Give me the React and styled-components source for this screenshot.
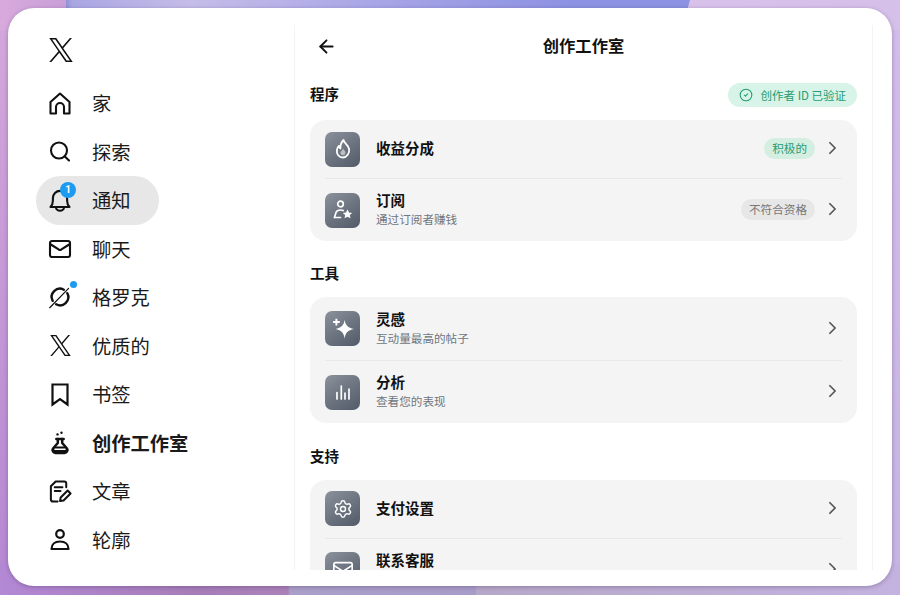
import styled, { createGlobalStyle } from "styled-components";
import { ArrowLeft, ChevronRight, CircleCheck, Search, Settings, Mail } from "lucide-react";

const Global = createGlobalStyle`
  html, body { margin: 0; padding: 0; }
  body {
    font-family: "Noto Sans CJK SC", "Noto Sans", sans-serif;
    background-color: #b9a0d6;
  }
  * { box-sizing: border-box; }
`;

const NAV = [
  { label: "家", icon: "home" },
  { label: "探索", icon: "search" },
  { label: "通知", icon: "bell", active: true },
  { label: "聊天", icon: "mail" },
  { label: "格罗克", icon: "grok" },
  { label: "优质的", icon: "x" },
  { label: "书签", icon: "bookmark" },
  { label: "创作工作室", icon: "flask", bold: true },
  { label: "文章", icon: "article" },
  { label: "轮廓", icon: "user" },
];

const SECTIONS = [
  {
    title: "程序",
    badge: "创作者 ID 已验证",
    rows: [
      { icon: "flame", title: "收益分成", pill: "积极的", good: true },
      { icon: "userStar", title: "订阅", sub: "通过订阅者赚钱", pill: "不符合资格", tall: true },
    ],
  },
  {
    title: "工具",
    rows: [
      { icon: "spark", title: "灵感", sub: "互动量最高的帖子", tall: true },
      { icon: "bars", title: "分析", sub: "查看您的表现", tall: true },
    ],
  },
  {
    title: "支持",
    rows: [
      { icon: "gear", title: "支付设置" },
      { icon: "envelope", title: "联系客服", tall: true },
    ],
  },
];

function XLogo({ size }) {
  return (
    <svg width={size} height={size} viewBox="0 0 24 24" fill="#111">
      <path d="M14.23 10.16 22.96 0h-2.07l-7.58 8.82L7.25 0H.27l9.16 13.33L.27 24h2.07l8.01-9.31L16.75 24h6.98l-9.5-13.84Zm-2.83 3.3-.93-1.33L3.09 1.56h3.18l5.96 8.52.93 1.33 7.74 11.08h-3.18l-6.32-9.03Z" />
    </svg>
  );
}

function NavIcon({ name }) {
  if (name === "search") return <Search size={25} strokeWidth={2.1} color="#111" />;
  if (name === "mail") return <Mail size={26} strokeWidth={2.1} color="#111" />;
  if (name === "x") return <XLogo size={21} />;
  if (name === "home") {
    return (
      <svg width="25" height="25" viewBox="0 0 24 24" fill="none" stroke="#111" strokeWidth="2.1" strokeLinejoin="round">
        <path d="M2.500 22V10.500L12 2l9.500 8.500V22H16v-6.500a4 4 0 0 0-8 0V22Z" />
      </svg>
    );
  }
  if (name === "bookmark") {
    return (
      <svg width="25" height="25" viewBox="0 0 24 24" fill="none" stroke="#111" strokeWidth="2.2">
        <path d="M4.500 2h15v20L12 16.500 4.500 22Z" />
      </svg>
    );
  }
  if (name === "user") {
    return (
      <svg width="25" height="25" viewBox="0 0 24 24" fill="none" stroke="#111" strokeWidth="2.2" strokeLinejoin="round">
        <circle cx="12" cy="6.500" r="3.800" />
        <path d="M3.500 21.500c0-4.500 3.200-7.500 8.500-7.500s8.500 3 8.500 7.500Z" />
      </svg>
    );
  }
  if (name === "bell") {
    return (
      <svg width="24" height="24" viewBox="0 0 24 24" fill="none" stroke="#111" strokeWidth="2.1" strokeLinecap="round" strokeLinejoin="round">
        <path d="M2.500 19h19c-1.600-1.600-2.400-3.500-2.400-6.500V10a7.100 7.100 0 0 0-14.200 0v2.500c0 3-.8 4.900-2.400 6.500Z" />
        <path d="M8 19.500a4 3.200 0 0 0 8 0" />
      </svg>
    );
  }
  if (name === "grok") {
    return (
      <svg width="28" height="28" viewBox="0 0 28 28" fill="none" stroke="#111" strokeWidth="2.800" strokeLinecap="round">
        <path d="M18.500 5.500A9.600 9.600 0 0 0 5.500 18.500" />
        <path d="M22.500 9.500A9.600 9.600 0 0 1 9.500 22.500" />
        <path d="M24 4 2 26.500" strokeWidth="1.400" />
      </svg>
    );
  }
  if (name === "flask") {
    return (
      <svg width="26" height="26" viewBox="0 0 24 24" fill="none" stroke="#111" strokeWidth="2.500" strokeLinecap="round" strokeLinejoin="round">
        <path d="M8.300 8h7.400" />
        <path d="M9.800 8v4L5 17.500c-1.200 2 .2 4.500 2.500 4.500h9c2.300 0 3.700-2.500 2.500-4.500L14.200 12V8" />
        <path d="M6.500 15.500h11l2 4-2 2.500h-11l-2-2.500z" fill="#111" stroke="none" />
        <path d="M7 18.300h10" stroke="#fff" strokeWidth="1.500" />
        <circle cx="9.500" cy="3.400" r="1.200" fill="#111" stroke="none" />
        <circle cx="13.500" cy="1.800" r="1.200" fill="#111" stroke="none" />
      </svg>
    );
  }
  if (name === "article") {
    return (
      <svg width="25" height="25" viewBox="0 0 25 25" fill="none" stroke="#111" strokeWidth="2.1" strokeLinecap="round" strokeLinejoin="round">
        <path d="M10 23H5.500A2.500 2.500 0 0 1 3 20.500V7l5-5h9a2 2 0 0 1 2 2v4" />
        <path d="M7 8h8M7 12h6" />
        <path d="m12.500 22.500.7-3.700 7.300-7.300 3 3-7.300 7.300-3.700.7Z" />
      </svg>
    );
  }
  return null;
}

function TileIcon({ name }) {
  if (name === "gear") return <Settings size={20} strokeWidth={1.7} color="#fff" />;
  if (name === "envelope") return <Mail size={22} strokeWidth={1.8} color="#fff" />;
  if (name === "flame") {
    return (
      <svg width="20" height="22" viewBox="0 0 20 22" fill="none" stroke="#fff" strokeWidth="1.800" strokeLinejoin="round">
        <path d="M10.500 2c.5 3 4.800 5 5.600 9 .7 4-2.300 8.500-6.200 8.500s-6.600-3.500-6-7.500c.2-1.600 1-3 2-4 .2 1.200.7 2 1.500 2.500C7.200 7.500 8 4.500 10.500 2Z" />
        <path d="M10.300 10.500c.2 1.500 2.300 2.500 2.300 4.500a2.700 2.700 0 0 1-5.300 0c0-1.300.8-1.700 1.400-2.300.5-.6 1.200-1.200 1.600-2.200Z" fill="#fff" stroke="none" opacity="0.550" />
      </svg>
    );
  }
  if (name === "userStar") {
    return (
      <svg width="22" height="22" viewBox="0 0 22 22" fill="none" stroke="#fff" strokeWidth="1.700" strokeLinecap="round" strokeLinejoin="round">
        <circle cx="8.500" cy="5" r="2.800" />
        <path d="M2.500 18.500 4 13.500c.5-1.500 1.800-2.500 4.500-2.500 1 0 2 .2 2.700.5" />
        <path d="M2.500 18.500h6" />
        <path d="m15.500 10.500 1.500 3 3.200.4-2.400 2.200.7 3.200-3-1.600-3 1.600.7-3.200-2.400-2.200 3.200-.4z" fill="#fff" stroke="none" />
      </svg>
    );
  }
  if (name === "spark") {
    return (
      <svg width="26" height="26" viewBox="0 0 24 24" fill="#fff">
        <path d="M13.500 3.500c.8 5.200 3 7.400 8.500 8.500-5.500 1.100-7.700 3.300-8.500 9-.8-5.700-3-7.900-8.500-9 5.500-1.100 7.700-3.300 8.500-8.500Z" />
        <path d="M5 2.500h1.800v2.200H9v1.800H6.800v2.200H5V6.500H2.800V4.700H5z" />
      </svg>
    );
  }
  if (name === "bars") {
    return (
      <svg width="18" height="18" viewBox="0 0 18 18" stroke="#fff" strokeWidth="1.700" strokeLinecap="round">
        <path d="M3 9.500V16M7.300 3v13M11 10v6M15 6v10" />
      </svg>
    );
  }
  return null;
}

function App() {
  return (
    <Page>
      <Global />
      <Strip />
      <Card>
        <Side>
          <LogoWrap><XLogo size={24} /></LogoWrap>
          <Nav>
            {NAV.map((item) => (
              <NavRow key={item.label} $active={item.active}>
                <NavGlyph>
                  <NavIcon name={item.icon} />
                  {item.icon === "bell" && <Count>1</Count>}
                  {item.icon === "grok" && <Dot />}
                </NavGlyph>
                <NavLabel $bold={item.bold}>{item.label}</NavLabel>
              </NavRow>
            ))}
          </Nav>
        </Side>
        <Main>
          <Header>
            <BackButton><ArrowLeft size={21} strokeWidth={2.2} color="#111" /></BackButton>
            <HeaderTitle>创作工作室</HeaderTitle>
          </Header>
          <Content>
            {SECTIONS.map((section) => (
              <section key={section.title}>
                <SectionHead>
                  <SectionTitle>{section.title}</SectionTitle>
                  {section.badge && (
                    <Verified>
                      <CircleCheck size={14} strokeWidth={1.8} />
                      {section.badge}
                    </Verified>
                  )}
                </SectionHead>
                <Group>
                  {section.rows.map((row) => (
                    <Row key={row.title} $tall={row.tall}>
                      <Tile><TileIcon name={row.icon} /></Tile>
                      <RowText $tall={row.tall}>
                        <RowTitle>{row.title}</RowTitle>
                        {row.sub && <RowSub>{row.sub}</RowSub>}
                      </RowText>
                      {row.pill && <Pill $good={row.good}>{row.pill}</Pill>}
                      <Chevron><ChevronRight size={22} strokeWidth={2} color="#555" /></Chevron>
                    </Row>
                  ))}
                </Group>
              </section>
            ))}
          </Content>
        </Main>
      </Card>
    </Page>
  );
}

export default App;

const Page = styled.div`
  position: relative;
  width: 900px;
  height: 595px;
  padding: 8px 8px 9px;
  overflow: hidden;
  background:
    linear-gradient(90deg, #b388d4 0%, #a77db8 22%, #ab82b8 32%, #a99fc9 32.2%, #a89cc8 52.8%, #b6a8c8 53%, #c4b2e0 100%) left bottom / 100% 30px no-repeat,
    linear-gradient(90deg, #d8aadc 0%, #c99fd8 7.3%, #d9c2ea 76%, #d5c0ea 100%) left top / 100% 30px no-repeat,
    linear-gradient(180deg, #d5a8dc 0%, #b487d2 100%) left top / 8px 100% no-repeat,
    linear-gradient(180deg, #d3bde9 0%, #c7b3e4 100%) right top / 8px 100% no-repeat,
    #b9a0d6;
`;

const Strip = styled.div`
  position: absolute;
  top: 0;
  left: 66px;
  width: 624px;
  height: 9px;
  background: linear-gradient(90deg, #8f8fd6 0%, #a9a7e3 1%, #c5bde8 20%, #a3a2e6 55%, #8d92e2 80%, #8d92e2 100%);
  clip-path: polygon(0 0, 100% 0, 99.600% 100%, 0 100%);
`;

const Card = styled.div`
  position: relative;
  display: flex;
  height: 578px;
  background: #fff;
  border-radius: 26px;
  box-shadow: 0 1px 4px rgba(60, 40, 90, 0.35);
  overflow: hidden;
`;

const Side = styled.aside`
  width: 286px;
  flex-shrink: 0;
  padding-top: 28px;
`;

const LogoWrap = styled.div`
  display: flex;
  height: 28px;
  padding-left: 41px;
  align-items: center;
`;

const Nav = styled.nav`
  display: flex;
  flex-direction: column;
  align-items: flex-start;
  padding-left: 28px;
  margin-top: 15px;
`;

const NavRow = styled.div`
  display: flex;
  align-items: center;
  height: 48.5px;
  padding: 0 28px 0 12px;
  border-radius: 25px;
  background: ${(p) => (p.$active ? "#e7e7e7" : "transparent")};
`;

const NavGlyph = styled.div`
  position: relative;
  display: flex;
  width: 24px;
  height: 26px;
  align-items: center;
  justify-content: center;
  margin-right: 20px;
`;

const NavLabel = styled.span`
  font-size: 19.3px;
  line-height: 26px;
  font-weight: ${(p) => (p.$bold ? 700 : 400)};
  color: #1a1a1a;
`;

const Count = styled.span`
  position: absolute;
  top: -5px;
  left: 12px;
  width: 16px;
  height: 16px;
  border-radius: 50%;
  background: #1d9bf0;
  color: #fff;
  font-family: "Roboto", sans-serif;
  font-size: 10px;
  font-weight: 700;
  line-height: 16px;
  text-align: center;
`;

const Dot = styled.span`
  position: absolute;
  top: -3px;
  left: 22px;
  width: 7px;
  height: 7px;
  border-radius: 50%;
  background: #1d9bf0;
`;

const Main = styled.main`
  display: flex;
  flex-direction: column;
  width: 579px;
  height: 545px;
  margin-top: 17px;
  border-left: 1px solid #f3f3f3;
  border-right: 1px solid #f3f3f3;
  overflow: hidden;
`;

const Header = styled.header`
  position: relative;
  display: flex;
  height: 44px;
  flex-shrink: 0;
  align-items: center;
  justify-content: center;
  padding-bottom: 4px;
`;

const BackButton = styled.div`
  position: absolute;
  left: 21px;
  top: 11px;
  display: flex;
`;

const HeaderTitle = styled.h1`
  margin: 0;
  font-size: 16.3px;
  font-weight: 700;
  color: #111;
`;

const Content = styled.div`
  display: flex;
  flex-direction: column;
  gap: 23.4px;
  padding: 14px 15px 0;
`;

const SectionHead = styled.div`
  display: flex;
  min-height: 20px;
  align-items: center;
  justify-content: space-between;
  margin-bottom: 13px;
`;

const SectionTitle = styled.h2`
  margin: -2px 0 0;
  font-size: 14.5px;
  line-height: 20px;
  font-weight: 700;
  color: #111;
`;

const Verified = styled.div`
  display: flex;
  height: 24px;
  align-items: center;
  gap: 8px;
  padding: 0 11px;
  border-radius: 12px;
  background: #d8f3e8;
  color: #1f9d74;
  font-size: 11.5px;
`;

const Group = styled.div`
  border-radius: 16px;
  background: #f4f4f4;
  padding: 0 15px;
`;

const Row = styled.div`
  display: flex;
  height: ${(p) => (p.$tall ? 63 : 58)}px;
  align-items: center;
  & + & {
    border-top: 1px solid #e8e8e8;
  }
`;

const Tile = styled.div`
  display: flex;
  width: 35px;
  height: 35px;
  flex-shrink: 0;
  align-items: center;
  justify-content: center;
  border-radius: 7px;
  background: linear-gradient(145deg, #8b929c 0%, #6a727e 55%, #525b68 100%);
  margin-right: 16px;
`;

const RowText = styled.div`
  display: flex;
  flex: 1;
  flex-direction: column;
  justify-content: ${(p) => (p.$tall ? "flex-start" : "center")};
  height: ${(p) => (p.$tall ? "38px" : "auto")};
  margin-top: -2px;
`;

const RowTitle = styled.div`
  font-size: 14.5px;
  line-height: 20px;
  font-weight: 700;
  color: #111;
`;

const RowSub = styled.div`
  font-size: 11.6px;
  line-height: 18px;
  color: #6f7680;
`;

const Pill = styled.span`
  display: flex;
  height: 21px;
  align-items: center;
  padding: 0 8px;
  border-radius: 11px;
  background: ${(p) => (p.$good ? "#d4eee2" : "#e7e7e7")};
  color: ${(p) => (p.$good ? "#2c9a70" : "#777")};
  font-size: 11.6px;
  transform: translateY(-1px);
`;

const Chevron = styled.div`
  display: flex;
  width: 21px;
  margin-left: 7px;
  margin-right: -1px;
  justify-content: center;
  transform: translateY(-1px);
`;
